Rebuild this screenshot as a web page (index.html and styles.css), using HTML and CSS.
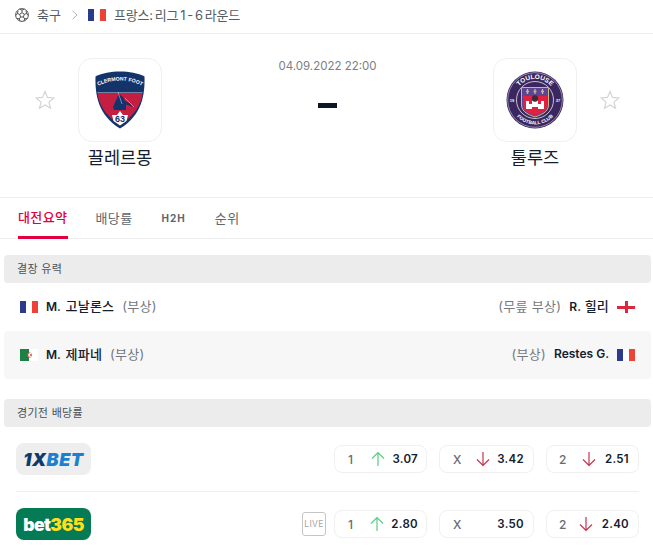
FILE: index.html
```html
<!DOCTYPE html>
<html lang="ko">
<head>
<meta charset="utf-8">
<title>끌레르몽 - 툴루즈</title>
<link rel="stylesheet" href="styles.css">
</head>
<body>
<nav class="crumbs">
  <svg class="ball" viewBox="0 0 14 14" width="14" height="14"><g fill="none" stroke="#555" stroke-width="1"><circle cx="7" cy="7" r="6.4"/><path d="M7 4.6 9.3 6.3 8.4 9H5.6L4.7 6.3Z"/><path d="M7 4.6V2.2L4.6 1M7 2.2 9.4 1M9.3 6.3 11.6 5.5 13 7.4M11.6 5.5 11 2.8M8.4 9 9.8 11 9 13M9.8 11 12.2 10.2M5.6 9 4.2 11 5 13M4.2 11 1.8 10.2M4.7 6.3 2.4 5.5 1 7.4M2.4 5.5 3 2.8"/></g></svg>
  <span class="crumb">축구</span>
  <svg class="chev" viewBox="0 0 8 10" width="8" height="10"><path d="M1.5 .8 6 5 1.5 9.2" fill="none" stroke="#b5b5b5" stroke-width="1"/></svg>
  <span class="flag fr"><i></i><i></i><i></i></span>
  <span class="crumb">프랑스: 리그 1 - 6 라운드</span>
</nav>

<header class="match">
  <svg class="star" viewBox="0 0 20 20" width="20" height="20"><path d="M10 1.6 12.5 7.4 18.8 8 14 12.1 15.5 18.3 10 15 4.5 18.3 6 12.1 1.2 8 7.5 7.4Z" fill="none" stroke="#d4d4d4" stroke-width="1.2"/></svg>
  <div class="team">
    <div class="crest">
      <svg viewBox="0 0 50 58" width="50" height="58">
        <path d="M25 0.5C34 .5 43 2 49.5 5.5 50 24 47 44 25 57.5 3 44 0 24 .5 5.5 7 2 16 .5 25 .5Z" fill="#14336b"/>
        <path d="M2.500 22H47.500C46.500 33 40 44 25 54.500 10 44 3.500 33 2.500 22Z" fill="#c41f42"/>
        <path d="M2.500 21.500H47.500" stroke="#fff" stroke-width=".4"/>
        <path d="M18 36 22 27 24 23 28 26 30 30 34 32 38 36 31 33.500 31 39H19Z" fill="#14336b"/>
        <path d="M23 21 27 33M30 27 39 36" stroke="#e7d9e2" stroke-width=".5"/>
        <path d="M25 40 28 44H33L31.500 50 25 54.500 18.500 50 17 44H22Z" fill="#fff"/>
        <path id="clermont-arc" d="M2 15.500C16 7.500 34 7.500 48 15.500" fill="none"/>
        <text class="crest-t"><textPath href="#clermont-arc" startOffset="50%" text-anchor="middle">CLERMONT FOOT</textPath></text>
        <text x="25" y="50.500" class="crest-n">63</text>
      </svg>
    </div>
    <div class="team-name">끌레르몽</div>
  </div>
  <div class="score">
    <div class="date">04.09.2022 22:00</div>
    <div class="dash"></div>
  </div>
  <div class="team">
    <div class="crest">
      <svg viewBox="0 0 58 58" width="58" height="58">
        <circle cx="29" cy="29" r="28.500" fill="#3b2760"/>
        <circle cx="29" cy="29" r="27.300" fill="none" stroke="#cfc8dc" stroke-width=".6"/>
        <circle cx="29" cy="29" r="18.500" fill="#3b2760" stroke="#e8e4ee" stroke-width=".8"/>
        <path d="M15.500 16.500H42.500V34C42.500 41 35 44 29 46 23 44 15.500 41 15.500 34Z" fill="#5e4591" stroke="#c9b68c"/>
        <path d="M17 25H41V35C41 40 34 43 29 44.500 24 43 17 40 17 35Z" fill="#e0213f"/>
        <path d="M20 38V30H23V33H26V29H32V33H35V30H38V38H32V36H26V38Z" fill="#fff"/>
        <circle cx="29" cy="27.500" r="3.200" fill="#3a2a3a"/>
        <path d="M21.500 18V23M29 18V23M36.500 18V23M20 20.500H23M27.500 20.500H30.500M35 20.500H38" stroke="#c9b68c" stroke-width="1.300"/>
        <path id="tfc-top" d="M8 29A21 21 0 0 1 50 29" fill="none"/>
        <path id="tfc-bot" d="M4.500 29A24.500 24.500 0 0 0 53.500 29" fill="none"/>
        <text class="tfc-t"><textPath href="#tfc-top" startOffset="50%" text-anchor="middle">TOULOUSE</textPath></text>
        <text class="tfc-s"><textPath href="#tfc-bot" startOffset="50%" text-anchor="middle">FOOTBALL CLUB</textPath></text>
        <text x="6" y="31" class="tfc-y">19</text>
        <text x="52" y="31" class="tfc-y">37</text>
      </svg>
    </div>
    <div class="team-name">툴루즈</div>
  </div>
  <svg class="star" viewBox="0 0 20 20" width="20" height="20"><path d="M10 1.6 12.5 7.4 18.8 8 14 12.1 15.5 18.3 10 15 4.5 18.3 6 12.1 1.2 8 7.5 7.4Z" fill="none" stroke="#d4d4d4" stroke-width="1.2"/></svg>
</header>

<div class="tabs">
  <a class="tab active">대전요약</a>
  <a class="tab">배당률</a>
  <a class="tab h2h">H2H</a>
  <a class="tab">순위</a>
</div>

<section class="missing">
  <h2 class="band">결장 유력</h2>
  <div class="player-row">
    <div class="side">
      <span class="flag fr"><i></i><i></i><i></i></span>
      <b class="pname"><span class="lat init">M.</span> 고날론스</b><span class="reason">(부상)</span>
    </div>
    <div class="side">
      <span class="reason">(무릎 부상)</span><b class="pname"><span class="lat">R.</span> 힐리</b>
      <span class="flag en"></span>
    </div>
  </div>
  <div class="player-row alt">
    <div class="side">
      <span class="flag dz"><svg viewBox="0 0 18 12" width="18" height="12"><rect width="9" height="12" fill="#1f8045"/><rect x="9" width="9" height="12" fill="#fff"/><circle cx="9.500" cy="6" r="2.600" fill="#e0413f"/><circle cx="10.300" cy="6" r="2.100" fill="#fff"/><circle cx="11" cy="6" r="1" fill="#e0413f"/></svg></span>
      <b class="pname"><span class="lat init">M.</span> 제파네</b><span class="reason">(부상)</span>
    </div>
    <div class="side">
      <span class="reason">(부상)</span><b class="pname"><span class="lat">Restes G.</span></b>
      <span class="flag fr"><i></i><i></i><i></i></span>
    </div>
  </div>
</section>

<section class="odds">
  <h2 class="band">경기전 배당률</h2>
  <div class="odds-row">
    <div class="book xbet"><span class="x1">1X</span><span class="xb">BET</span></div>
    <div class="chips">
      <div class="chip c1"><span class="lab">1</span><svg class="arr" viewBox="0 0 14 16" width="14" height="16"><path d="M7 15V1.500M1 7.500 7 1.500 13 7.500" fill="none" stroke="#58cf83" stroke-width="1.200"/></svg><b class="val">3.07</b></div>
      <div class="chip cx"><span class="lab">X</span><svg class="arr" viewBox="0 0 14 16" width="14" height="16"><path d="M7 1V14.500M1 8.500 7 14.500 13 8.500" fill="none" stroke="#c8324c" stroke-width="1.200"/></svg><b class="val">3.42</b></div>
      <div class="chip c2"><span class="lab">2</span><svg class="arr" viewBox="0 0 14 16" width="14" height="16"><path d="M7 1V14.500M1 8.500 7 14.500 13 8.500" fill="none" stroke="#c8324c" stroke-width="1.200"/></svg><b class="val">2.51</b></div>
    </div>
  </div>
  <div class="odds-row last">
    <div class="book b365"><span>bet</span><span class="y">365</span></div>
    <div class="chips">
      <span class="live">LIVE</span>
      <div class="chip c1"><span class="lab">1</span><svg class="arr" viewBox="0 0 14 16" width="14" height="16"><path d="M7 15V1.500M1 7.500 7 1.500 13 7.500" fill="none" stroke="#58cf83" stroke-width="1.200"/></svg><b class="val">2.80</b></div>
      <div class="chip cx"><span class="lab">X</span><b class="val">3.50</b></div>
      <div class="chip c2"><span class="lab">2</span><svg class="arr" viewBox="0 0 14 16" width="14" height="16"><path d="M7 1V14.500M1 8.500 7 14.500 13 8.500" fill="none" stroke="#c8324c" stroke-width="1.200"/></svg><b class="val">2.40</b></div>
    </div>
  </div>
</section>
</body>
</html>
```
FILE: styles.css
```css
* { box-sizing: border-box; }
html, body { margin: 0; padding: 0; }
body {
  width: 653px;
  height: 549px;
  overflow: hidden;
  background: #fff;
  color: #14202e;
  font-family: Inter, "Noto Sans CJK KR", sans-serif;
  font-size: 12px;
}
.crumbs {
  height: 34px;
  display: flex;
  align-items: center;
  padding: 0 0 4px 15px;
  border-bottom: 1px solid #eeeeee;
  color: #555c63;
}
.crumb { font-size: 13px; word-spacing: -1.500px; letter-spacing: -.2px; }
.crumb:nth-of-type(1) { letter-spacing: 0; }
.ball { margin-right: 8px; }
.chev { margin: 0 9px 0 10px; }
.flag { display: inline-flex; flex: none; width: 18px; height: 12px; justify-content: space-between; }
.flag i { width: 6px; height: 12px; }
.flag.fr i:nth-child(1) { background: #2b3a8c; }
.flag.fr i:nth-child(2) { background: #fff; }
.flag.fr i:nth-child(3) { background: #ee4237; }
.crumbs .flag { margin-right: 8px; }
.flag.en {
  background:
    linear-gradient(#d9293f, #d9293f) center / 100% 3px no-repeat,
    linear-gradient(#d9293f, #d9293f) center / 3px 100% no-repeat;
}
.match {
  height: 164px;
  display: flex;
  padding: 24px 33px 0 35px;
  gap: 23px;
  border-bottom: 1px solid #eeeeee;
}
.star { margin-top: 32px; flex: none; }
.team { width: 84px; flex: none; display: flex; flex-direction: column; align-items: center; }
.crest {
  width: 84px;
  height: 84px;
  border: 1px solid #f0f0f0;
  border-radius: 14px;
  display: flex;
  align-items: center;
  justify-content: center;
}
.team-name { margin-top: 4px; font-size: 17.500px; line-height: 24px; white-space: nowrap; color: #14202e; }
.score { flex: 1; margin: 0 -23px; text-align: center; }
.date { font-size: 11.500px; line-height: 16px; color: #7a8086; }
.dash { width: 19px; height: 5px; margin: 29px auto 0; background: #0c1826; }
.crest-t { font: 700 5.200px "Liberation Sans", sans-serif; fill: #fff; }
.crest-n { font: 700 9px "Liberation Sans", sans-serif; fill: #14336b; text-anchor: middle; }
.tfc-t { font: 700 6.500px "Liberation Sans", sans-serif; fill: #fff; }
.tfc-s { font: 700 4.800px "Liberation Sans", sans-serif; fill: #fff; }
.tfc-y { font: 700 4px "Liberation Sans", sans-serif; fill: #fff; text-anchor: middle; }

.tabs {
  height: 41px;
  display: flex;
  padding-left: 18px;
  gap: 28px;
  border-bottom: 1px solid #eeeeee;
}
.tab {
  height: 40px;
  display: flex;
  align-items: center;
  padding-bottom: 2px;
  font-size: 13px;
  letter-spacing: .4px;
  color: #5f666c;
}
.tab.active { color: #e3003f; border-bottom: 3px solid #e3003f; padding: 1px 1px 2px 0; font-weight: 500; margin: 0 -1px -1px 0; height: 41px; }
.tab.h2h { font-size: 10px; font-weight: 700; letter-spacing: 1px; padding-bottom: 0; margin: 0 1px; }

.band {
  margin: 0;
  margin-left: 4px;
  width: 647px;
  height: 28px;
  padding: 0 0 2px 13px;
  display: flex;
  align-items: center;
  background: #ececec;
  border-radius: 4px;
  font-size: 11px;
  font-weight: 400;
  color: #4a5157;
  letter-spacing: .3px;
}
.missing { padding-top: 16px; }
.player-row {
  height: 48px;
  margin: 0 0 0 4px;
  width: 647px;
  padding: 0 16px 4px;
  display: flex;
  justify-content: space-between;
  align-items: center;
}
.player-row.alt { background: #f7f7f7; border-radius: 4px; }
.side { display: flex; align-items: center; }
.side .flag { margin-top: 4px; }
.pname { font-size: 13px; font-weight: 500; letter-spacing: .2px; color: #14202e; }
.lat { font-size: 12px; font-weight: 600; letter-spacing: 0; }
.lat.init { margin-right: 1px; }
.side .flag:first-child { margin-right: 8px; }
.side .flag:last-child:not(:first-child) { margin-left: 8px; }
.side .reason:first-child { margin-right: 8px; }
.pname + .reason { margin-left: 8px; }
.reason { font-size: 13px; letter-spacing: .3px; color: #73797f; }
.odds { padding-top: 20px; }
.odds-row {
  height: 65px;
  margin: 0 14px 0 16px;
  display: flex;
  align-items: center;
  justify-content: space-between;
  border-bottom: 1px solid #eeeeee;
}
.odds-row.last { border-bottom: 0; height: 64px; }
.book {
  width: 75px;
  height: 32px;
  border-radius: 8px;
  display: flex;
  align-items: center;
  justify-content: center;
  font-family: Inter, sans-serif;
  font-weight: 900;
}
.xbet { background: #eeeeee; font-style: italic; font-size: 18px; letter-spacing: .5px; }
.x1 { color: #0f3a6b; }
.xb { color: #1b80d1; }
.b365 { background: #047a55; color: #fff; font-size: 17.500px; letter-spacing: -.6px; }
.b365 .y { color: #ffdf1b; }
.chips { display: flex; align-items: center; gap: 12px; }
.live {
  width: 24px;
  height: 24px;
  margin-right: -4px;
  border: 1px solid #c5c5c5;
  border-radius: 3px;
  display: flex;
  align-items: center;
  justify-content: center;
  font-size: 8.500px;
  letter-spacing: .3px;
  color: #a5a5a5;
}
.chip {
  height: 28px;
  display: flex;
  align-items: center;
  justify-content: space-between;
  padding: 0 9px 0 13px;
  border: 1px solid #f0f0f0;
  border-radius: 8px;
}
.c1 { width: 93px; padding-right: 8px; }
.cx { width: 95px; }
.c2 { width: 93px; padding-left: 12px; }
.lab { font-size: 12px; font-weight: 500; color: #666c72; width: 12px; }
.arr { margin: 0 7px 0 auto; }
.c2 .arr { margin-right: 9px; }
.cx .lab + .val { margin-left: auto; }
.val { font-size: 11.500px; font-weight: 600; letter-spacing: .3px; color: #14202e; }
```
